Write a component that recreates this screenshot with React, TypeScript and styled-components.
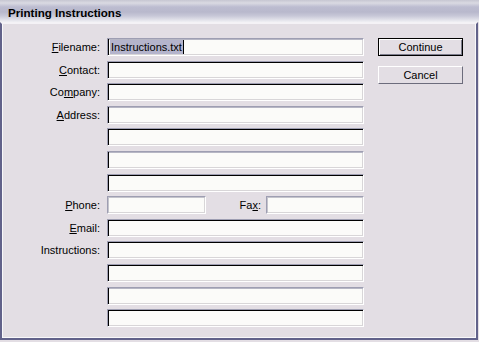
import React from "react";
import styled, { createGlobalStyle, css } from "styled-components";

const Global = createGlobalStyle`
  html, body { margin: 0; padding: 0; background: #e3dee4; }
  body { font-family: "Liberation Sans", Arial, sans-serif; font-size: 11px; color: #000; }
  * { box-sizing: border-box; }
`;

const Window = styled.div`
  width: 479px;
  height: 342px;
  display: flex;
  flex-direction: column;
  background: #e3dee4;
  overflow: hidden;
`;

const TitleBar = styled.div`
  height: 22px;
  flex: none;
  display: flex;
  align-items: flex-end;
  padding: 0 0 3px 8px;
  background: linear-gradient(
    to bottom,
    #c6c6d2 0px,
    #dadae2 3px,
    #bcbcd0 7px,
    #b8b8cc 12px,
    #c8c8d8 16px,
    #dcdce6 19px,
    #f0f0f4 22px
  );
  font-weight: bold;
  font-size: 11.6px;
  letter-spacing: 0px;
`;

const Body = styled.div`
  flex: 1;
  display: flex;
  align-items: flex-start;
  border-top: 2px solid #f4f2f6;
  border-left: 2px solid #62628a;
  border-right: 2px solid #62628a;
  border-bottom: 2px solid #62628a;
  box-shadow: inset 1px 0 0 #f8f8fa, inset -1px -1px 0 #f8f8fa;
  padding: 14px 0 0 1px;
  margin: 0 1px 2px 0;
  column-gap: 14px;
`;

const Form = styled.div`
  display: grid;
  grid-template-columns: 98px 257px;
  grid-auto-rows: 18px;
  column-gap: 6px;
  row-gap: 4.6px;
`;

const Label = styled.label`
  display: flex;
  align-items: center;
  justify-content: flex-end;
  white-space: nowrap;
  font-size: 11px;
  padding-right: 1px;
  u { text-decoration: underline; text-underline-offset: 1px; }
`;

type Variant = "dark" | "mid" | "flat";

const Field = styled.div<{ $v: Variant; $w?: number }>`
  height: 18px;
  width: ${(p) => (p.$w ? `${p.$w}px` : "100%")};
  flex: none;
  background: #fbfbf9;
  border-top: 1px solid #9e9eb2;
  border-left: 1px solid #9e9eb2;
  border-right: 1px solid #ffffff;
  border-bottom: 1px solid #ffffff;
  display: flex;
  align-items: center;
  padding-left: 2px;
  ${(p) =>
    p.$v === "dark"
      ? css`box-shadow: inset 1px 1px 0 #000, inset -1px -1px 0 #d8d6d8;`
      : p.$v === "mid"
      ? css`box-shadow: inset 1px 0 0 #000, inset 0 1px 0 #b6b6c4, inset -1px -1px 0 #d8d6d8;`
      : css`box-shadow: inset 1px 1px 0 #c4c4cc, inset -1px -1px 0 #d8d6d8;`}
`;

const Selected = styled.span`
  background: #b4b4cc;
  color: #000;
  line-height: 14px;
  padding: 0 1px;
  border-right: 1px solid #000;
`;

const SplitRow = styled.div`
  display: flex;
  align-items: stretch;
`;

const InlineLabel = styled(Label)`
  flex: 1;
  padding-right: 5px;
`;

const Buttons = styled.div`
  display: flex;
  flex-direction: column;
  gap: 10px;
`;

const Button = styled.button<{ $default?: boolean }>`
  width: 85px;
  height: 18px;
  padding: 0;
  font-family: "Liberation Sans", Arial, sans-serif;
  font-size: 11px;
  color: #000;
  background: #e3dee4;
  border-top: 1px solid #ffffff;
  border-left: 1px solid #ffffff;
  border-right: 1px solid #6c6c7c;
  border-bottom: 1px solid #6c6c7c;
  ${(p) =>
    p.$default &&
    css`
      border: 1px solid #000;
      box-shadow: inset 1px 1px 0 #ffffff, inset -1px -1px 0 #7c7c8c;
    `}
`;

const rows: { label: React.ReactNode; v: Variant; value?: boolean }[] = [
  { label: <><u>F</u>ilename:</>, v: "mid", value: true },
  { label: <><u>C</u>ontact:</>, v: "dark" },
  { label: <>Co<u>m</u>pany:</>, v: "dark" },
  { label: <><u>A</u>ddress:</>, v: "mid" },
  { label: "", v: "dark" },
  { label: "", v: "mid" },
  { label: "", v: "dark" },
];

const rows2: { label: React.ReactNode; v: Variant }[] = [
  { label: <><u>E</u>mail:</>, v: "dark" },
  { label: <>Instructions:</>, v: "dark" },
  { label: "", v: "dark" },
  { label: "", v: "mid" },
  { label: "", v: "dark" },
];

export default function App() {
  return (
    <>
      <Global />
      <Window>
        <TitleBar>Printing Instructions</TitleBar>
        <Body>
          <Form>
            {rows.map((r, i) => (
              <React.Fragment key={`a${i}`}>
                <Label>{r.label}</Label>
                <Field $v={r.v}>
                  {r.value && <Selected>Instructions.txt</Selected>}
                </Field>
              </React.Fragment>
            ))}
            <Label>
              <u>P</u>hone:
            </Label>
            <SplitRow>
              <Field $v="flat" $w={99} />
              <InlineLabel>
                Fa<u>x</u>:
              </InlineLabel>
              <Field $v="flat" $w={98} />
            </SplitRow>
            {rows2.map((r, i) => (
              <React.Fragment key={`b${i}`}>
                <Label>{r.label}</Label>
                <Field $v={r.v} />
              </React.Fragment>
            ))}
          </Form>
          <Buttons>
            <Button $default>Continue</Button>
            <Button>Cancel</Button>
          </Buttons>
        </Body>
      </Window>
    </>
  );
}
